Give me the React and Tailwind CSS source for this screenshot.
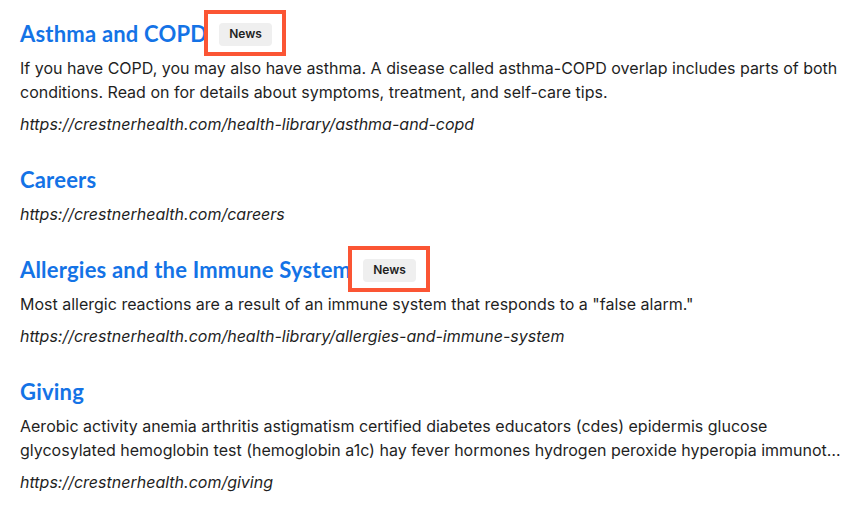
import React from 'react';

const results = [
  {
    title: 'Asthma and COPD',
    badge: true,
    body: ['If you have COPD, you may also have asthma. A disease called asthma-COPD overlap includes parts of both conditions. Read on for details about symptoms, treatment, and self-care tips.'],
    url: 'https://crestnerhealth.com/health-library/asthma-and-copd',
  },
  {
    title: 'Careers',
    url: 'https://crestnerhealth.com/careers',
  },
  {
    title: 'Allergies and the Immune System',
    badge: true,
    body: ['Most allergic reactions are a result of an immune system that responds to a "false alarm."'],
    url: 'https://crestnerhealth.com/health-library/allergies-and-immune-system',
  },
  {
    title: 'Giving',
    // excerpt is cut off mid-word on its second line
    body: [
      'Aerobic activity anemia arthritis astigmatism certified diabetes educators (cdes) epidermis glucose',
      'glycosylated hemoglobin test (hemoglobin a1c) hay fever hormones hydrogen peroxide hyperopia immunotherapy insulin resistance lipids metabolism',
    ],
    url: 'https://crestnerhealth.com/giving',
  },
];

function Badge() {
  return (
    <span className="relative ml-3 inline-flex">
      <span className="inline-flex h-[23px] items-center rounded bg-[#efefef] px-[10px] text-[12px] font-semibold text-[#1f1f1f]">
        News
      </span>
      {/* annotation box */}
      <span className="pointer-events-none absolute -top-[13px] -bottom-[10px] -left-[15px] -right-[14px] border-4 border-[#fb5534]"></span>
    </span>
  );
}

export default function App() {
  return (
    <div className="min-h-[505px] w-[849px] bg-white px-5 pt-5 font-['Inter',sans-serif] text-[#1f1f1f]">
      <div className="flex w-[822px] flex-col gap-[30px]">
        {results.map((r) => (
          <div key={r.title} className="flex flex-col gap-2">
            <h3 className="flex items-center">
              <a href="#" className="font-['Lato',sans-serif] text-[22px] font-bold leading-[28px] tracking-[0.2px] text-[#1473e6]">
                {r.title}
              </a>
              {r.badge && <Badge />}
            </h3>
            {r.body && r.body.length === 1 && (
              <p className="text-[16px] leading-[24px]">{r.body[0]}</p>
            )}
            {r.body && r.body.length > 1 && (
              <p className="text-[16px] leading-[24px]">
                <span className="block">{r.body[0]}</span>
                <span className="block truncate">{r.body[1]}</span>
              </p>
            )}
            <p className="text-[16px] italic leading-[24px]">{r.url}</p>
          </div>
        ))}
      </div>
    </div>
  );
}
